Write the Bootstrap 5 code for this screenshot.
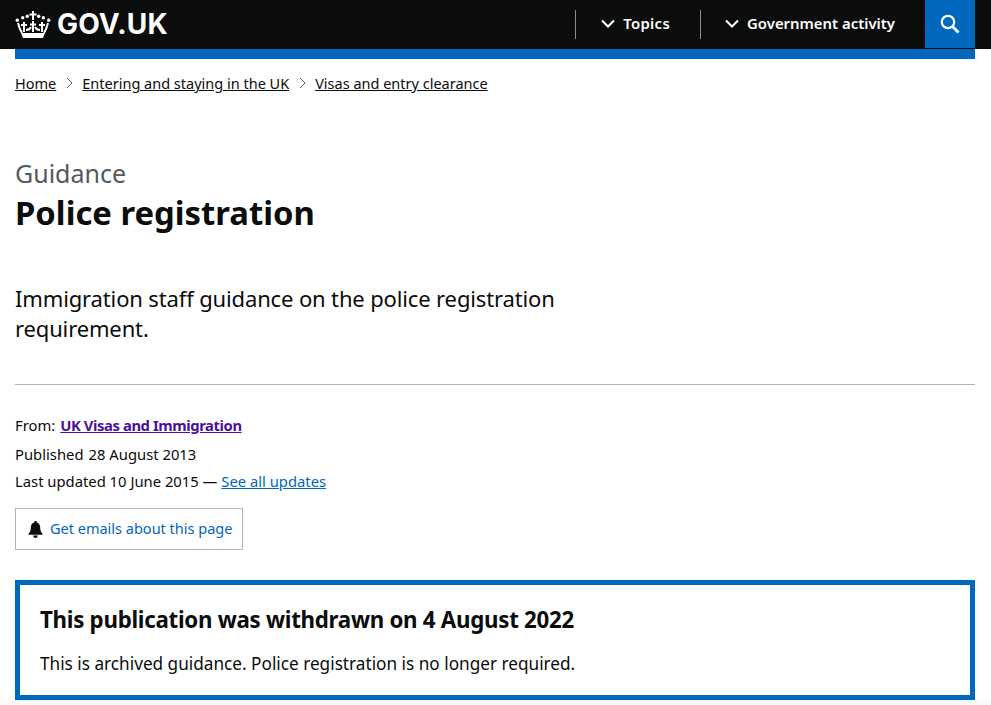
<!DOCTYPE html>
<html lang="en">
<head>
    <meta charset="UTF-8">
    <meta name="viewport" content="width=device-width, initial-scale=1">
    <title>Police registration - GOV.UK</title>

    <link href="https://cdn.jsdelivr.net/npm/bootstrap@5.3.0/dist/css/bootstrap.min.css" rel="stylesheet">

    <style>
        body {
            font-family: "Noto Sans", "Liberation Sans", sans-serif;
            color: #0b0c0c;
            background: #fff;
            height: 705px;
            overflow: hidden;
        }
        a { color: #0068bd; }
        .top-bar {
            background: #0b0c0c;
            height: 49px;
            padding: 0 16px 0 15px;
        }
        .brand {
            color: #fff;
            font-family: "Inter", "Liberation Sans", sans-serif;
            font-weight: 700;
            font-size: 28px;
            line-height: 48px;
            text-decoration: none;
            letter-spacing: .2px;
            gap: 6px;
        }
        .top-link {
            color: #fff;
            font-weight: 600;
            font-size: 14.9px;
            text-decoration: none;
            height: 29px;
            border-left: 1px solid #8b8d8e;
            padding: 0 30px 2px 24px;
            gap: 8px;
        }
        .top-link.first-link {
            letter-spacing: .3px;
            padding-left: 25px;
        }
        .search-btn {
            width: 50px;
            height: 48px;
            align-self: flex-start;
            background: #0068bd;
        }
        .blue-rule {
            background: #0068bd;
            height: 10px;
            margin: 0 16px 0 15px;
        }
        .page-wrap { padding: 0 16px 0 15px; }
        .crumbs {
            font-size: 14.5px;
            line-height: 20px;
            padding-top: 14px;
        }
        .crumbs a { color: #0b0c0c; }
        .crumbs svg { margin: 0 9px 0 10px; }
        .doc-type {
            font-size: 25px;
            line-height: 30px;
            color: #505a5f;
            margin-top: 65px;
        }
        .doc-title {
            font-size: 32.8px;
            font-weight: 700;
            line-height: 40px;
            margin: 5px 0 0;
        }
        .doc-lead {
            font-size: 22px;
            letter-spacing: -.14px;
            line-height: 30px;
            margin: 50px 0 0;
            width: 600px;
        }
        .doc-rule {
            border-top: 1px solid #b1b4b6;
            margin-top: 41px;
        }
        .doc-meta {
            font-size: 14.8px;
            line-height: 20px;
            margin-top: 30px;
        }
        .doc-meta > div { margin-bottom: 7px; }
        .doc-meta > div:first-child { margin-bottom: 9px; }
        .meta-gap { margin-right: 5px; }
        .org-link {
            color: #4c0f9c;
            font-weight: 700;
            letter-spacing: -.42px;
        }
        .email-btn {
            border: 1px solid #b1b4b6;
            height: 42px;
            width: 228px;
            margin-top: 17px;
            padding-left: 12px;
            font-size: 14.5px;
            text-decoration: none;
            gap: 7px;
        }
        .notice-box {
            border: 5px solid #0068bd;
            height: 120px;
            margin-top: 30px;
            padding: 20px;
        }
        .notice-box h2 {
            font-size: 22.3px;
            font-weight: 700;
            letter-spacing: -.28px;
            line-height: 30px;
            margin: 0 0 16px;
        }
        .notice-box p {
            font-size: 17.2px;
            line-height: 25px;
            margin: 0;
        }
        .bottom-fade {
            position: fixed;
            left: 0;
            right: 0;
            bottom: 0;
            height: 10px;
            background: linear-gradient(rgba(0, 0, 0, 0), rgba(0, 0, 0, .03));
        }
    </style>
</head>
<body>

    <!-- Header -->
    <div class="top-bar d-flex align-items-start">
        <a href="#" class="brand d-flex align-items-center">
            <svg width="36" height="27" viewBox="0 0 36 27" fill="#fff">
                <!-- crown -->
                <path d="M17 0h2v2.500h2.500v2H19V9h-2V4.500h-2.500v-2H17z"/>
                <circle cx="12.300" cy="5.300" r="1.700"/><circle cx="23.700" cy="5.300" r="1.700"/>
                <circle cx="7.700" cy="6.700" r="1.700"/><circle cx="28.300" cy="6.700" r="1.700"/>
                <circle cx="2.300" cy="9.300" r="1.700"/><circle cx="33.700" cy="9.300" r="1.700"/>
                <g fill="none" stroke="#fff" stroke-width="2">
                    <path d="M18 10v11M15 13.500h6M9 11v10M6 14h6M27 11v10M24 14h6"/>
                    <path d="M3 12c1 4 2 7 4 10M33 12c-1 4-2 7-4 10"/>
                    <path d="M11 19c2 0 4-1 5-3M25 19c-2 0-4-1-5-3"/>
                </g>
                <path d="M6 22h24l-2 5H8z"/>
            </svg>
            GOV.UK
        </a>
        <div class="ms-auto d-flex align-items-center" style="height:49px">
            <a href="#" class="top-link first-link d-flex align-items-center">
                <svg width="14" height="10" viewBox="0 0 14 10" fill="none" stroke="#fff" stroke-width="2"><path d="M1 1.500l6 6 6-6"/></svg>
                Topics
            </a>
            <a href="#" class="top-link d-flex align-items-center">
                <svg width="14" height="10" viewBox="0 0 14 10" fill="none" stroke="#fff" stroke-width="2"><path d="M1 1.500l6 6 6-6"/></svg>
                Government activity
            </a>
            <a href="#" class="search-btn d-flex align-items-center justify-content-center">
                <svg width="20" height="20" viewBox="0 0 20 20" fill="none" stroke="#fff"><circle cx="8" cy="8" r="6.200" stroke-width="2.200"/><path d="M12.500 12.500l6 6" stroke-width="2.800"/></svg>
            </a>
        </div>
    </div>
    <div class="blue-rule"></div>

    <div class="page-wrap">
        <div class="crumbs d-flex align-items-center">
            <a href="#">Home</a>
            <svg width="7" height="12" viewBox="0 0 7 12" fill="none" stroke="#505a5f"><path d="M1 1l5 5-5 5"/></svg>
            <a href="#">Entering and staying in the UK</a>
            <svg width="7" height="12" viewBox="0 0 7 12" fill="none" stroke="#505a5f"><path d="M1 1l5 5-5 5"/></svg>
            <a href="#">Visas and entry clearance</a>
        </div>

        <div class="doc-type">Guidance</div>
        <h1 class="doc-title">Police registration</h1>
        <p class="doc-lead">Immigration staff guidance on the police registration requirement.</p>
        <div class="doc-rule"></div>

        <div class="doc-meta">
            <div><span class="meta-gap">From:</span><a href="#" class="org-link">UK Visas and Immigration</a></div>
            <div><span class="meta-gap">Published</span>28 August 2013</div>
            <div>Last updated 10 June 2015 — <a href="#">See all updates</a></div>
        </div>

        <a href="#" class="email-btn d-flex align-items-center">
            <svg width="15" height="17" viewBox="0 0 16 18" fill="#0b0c0c"><path d="M8 0c1 0 1.500.7 1.500 1.500C12 2.200 13 4.500 13 7c0 3 1 5 2.500 6.500v1H.5v-1C2 12 3 10 3 7c0-2.500 1-4.800 3.500-5.500C6.500.7 7 0 8 0zM5.500 15.500h5C10.500 17 9.300 18 8 18s-2.500-1-2.500-2.500z"/></svg>
            Get emails about this page
        </a>

        <div class="notice-box">
            <h2>This publication was withdrawn on 4 August 2022</h2>
            <p>This is archived guidance. Police registration is no longer required.</p>
        </div>
    </div>
    <div class="bottom-fade"></div>

    <script src="https://cdn.jsdelivr.net/npm/bootstrap@5.3.0/dist/js/bootstrap.bundle.min.js"></script>

</body>
</html>
